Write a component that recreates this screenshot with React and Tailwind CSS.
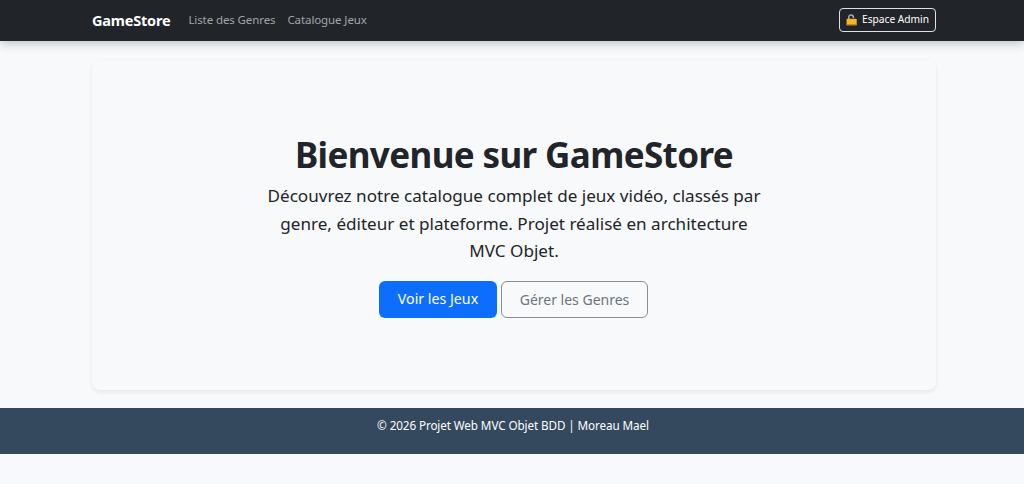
const LockIcon = () => (
    <svg width="12" height="12" viewBox="0 0 12 12" className="mr-[4px] shrink-0">
        <path d="M2.8 5.5V3.2C2.8 1.8 3.8 0.9 5.1 0.9S7.4 1.8 7.4 3.2V4" fill="none" stroke="#a8abaf" strokeWidth="1.5" />
        <path d="M0.6 5.4C0.6 5 0.9 4.7 1.3 4.7H10C10.4 4.7 10.7 5 10.7 5.4V11.2H0.6Z" fill="#f7b52b" />
        <rect x="0.6" y="10" width="10.1" height="1.2" fill="#c98a16" />
    </svg>
);

const Navbar = () => (
    <nav className="h-[41px] bg-[#212529] shadow-[0_2px_10px_rgba(0,0,0,0.25)] relative">
        <div className="w-[844px] ml-[92px] h-full flex items-center">
            <a className="text-[14.5px] tracking-[-0.2px] font-bold text-white mr-[18px]">GameStore</a>
            <a className="-mt-[1px] text-[11.5px] tracking-[-0.1px] text-[#a3a5a8] mr-[12px]">Liste des Genres</a>
            <a className="-mt-[1px] text-[11.5px] tracking-[-0.1px] text-[#a3a5a8]">Catalogue Jeux</a>
            <a className="ml-auto -mt-[1px] h-[24px] w-[97px] flex items-center justify-center border border-[#dee2e6] rounded-[4px] text-[10.2px] text-white">
                <LockIcon />
                Espace Admin
            </a>
        </div>
    </nav>
);

const Hero = () => (
    <div className="w-[844px] h-[330px] ml-[92px] mt-[19px] bg-[#f8f9fa] rounded-[8px] shadow-[0_2px_4px_rgba(0,0,0,0.08)] flex flex-col items-center pt-[70px]">
        <h1 className="text-[35px] tracking-[-0.62px] leading-[50px] font-bold text-[#212529]">Bienvenue sur GameStore</h1>
        <p className="w-[500px] mt-[2px] text-center text-[17.1px] leading-[27.5px] text-[#212529]">
            Découvrez notre catalogue complet de jeux vidéo, classés par genre, éditeur et plateforme. Projet réalisé en architecture MVC Objet.
        </p>
        <div className="flex gap-[4px] mt-[16px] pr-[1px]">
            <a className="h-[37px] w-[118px] flex items-center justify-center rounded-[6px] bg-[#0d6efd] text-white text-[14.2px]">Voir les Jeux</a>
            <a className="h-[37px] w-[147px] flex items-center justify-center rounded-[6px] border border-[#868e96] text-[#6c757d] text-[14px]">Gérer les Genres</a>
        </div>
    </div>
);

export default function App() {
    return (
        <div className="h-[484px] overflow-hidden bg-[#f8f9fa] font-['Noto_Sans',sans-serif]">
            <Navbar />
            <Hero />
            <footer className="h-[46px] mt-[18px] pl-[2px] bg-[#34495e] text-center text-[11.7px] tracking-[-0.1px] leading-[34px] text-white">
                © 2026 Projet Web MVC Objet BDD | Moreau Mael
            </footer>
        </div>
    );
}
